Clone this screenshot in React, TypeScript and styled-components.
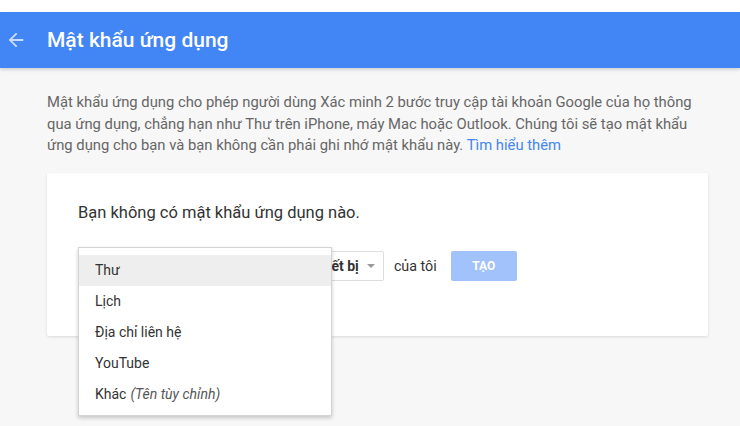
import styled, { createGlobalStyle } from "styled-components";

const GlobalStyle = createGlobalStyle`
  html, body {
    margin: 0;
    padding: 0;
    background: #f7f7f7;
    font-family: Roboto, "Liberation Sans", Arial, sans-serif;
  }
`;

const appOptions = ["Thư", "Lịch", "Địa chỉ liên hệ", "YouTube"];

function BackIcon() {
  return (
    <svg width="22" height="22" viewBox="0 0 24 24" fill="rgba(255,255,255,0.72)">
      <path d="M20 11H7.83l5.59-5.59L12 4l-8 8 8 8 1.41-1.41L7.83 13H20v-2z" />
    </svg>
  );
}

function App() {
  return (
    <Page>
      <GlobalStyle />
      <TopStrip />
      <Header>
        <BackButton>
          <BackIcon />
        </BackButton>
        <Title>Mật khẩu ứng dụng</Title>
      </Header>

      <Content>
        <Intro>
          Mật khẩu ứng dụng cho phép người dùng Xác minh 2 bước truy cập tài
          khoản Google của họ thông qua ứng dụng, chẳng hạn như Thư trên
          iPhone, máy Mac hoặc Outlook. Chúng tôi sẽ tạo mật khẩu ứng dụng cho
          bạn và bạn không cần phải ghi nhớ mật khẩu này.{" "}
          <Link href="#">Tìm hiểu thêm</Link>
        </Intro>

        <Card>
          <EmptyText>Bạn không có mật khẩu ứng dụng nào.</EmptyText>
          <Row>
            <SelectWrap>
              <Select $width={150}>
                <span>Chọn ứng dụng</span>
                <Caret />
              </Select>
              <Menu>
                {appOptions.map((o, i) => (
                  <MenuItem key={o} $active={i === 0}>
                    {o}
                  </MenuItem>
                ))}
                <MenuItem>
                  Khác <em>(Tên tùy chỉnh)</em>
                </MenuItem>
              </Menu>
            </SelectWrap>
            <Word>trên</Word>
            <Select $width={111} $padLeft={5}>
              <span>Chọn thiết bị</span>
              <Caret />
            </Select>
            <Word>của tôi</Word>
            <CreateButton disabled>Tạo</CreateButton>
          </Row>
        </Card>
      </Content>
    </Page>
  );
}

export default App;

const Page = styled.div`
  min-height: 426px;
`;

const TopStrip = styled.div`
  height: 12px;
  background: #fff;
`;

const Header = styled.header`
  height: 56px;
  background: #4285f4;
  display: flex;
  align-items: center;
  box-shadow: 0 2px 3px rgba(0, 0, 0, 0.15);
`;

const BackButton = styled.div`
  width: 47px;
  padding-left: 5px;
  box-sizing: border-box;
  display: flex;
  align-items: center;
`;

const Title = styled.h1`
  margin: 0;
  color: #fff;
  font-size: 21px;
  font-weight: 500;
`;

const Content = styled.main`
  padding: 24px 32px 0 47px;
`;

const Intro = styled.p`
  margin: 0;
  font-size: 14.8px;
  line-height: 21.5px;
  color: #666;
  max-width: 660px;
`;

const Link = styled.a`
  color: #4285f4;
  text-decoration: none;
`;

const Card = styled.section`
  margin-top: 16px;
  width: 661px;
  box-sizing: border-box;
  background: #fff;
  border-radius: 2px;
  box-shadow: 0 1px 3px rgba(0, 0, 0, 0.12);
  padding: 30px 31px 55px;
`;

const EmptyText = styled.p`
  margin: 0;
  font-size: 16.5px;
  line-height: 20px;
  color: #333;
`;

const Row = styled.div`
  margin-top: 28px;
  display: flex;
  align-items: center;
  gap: 9px;
`;

const SelectWrap = styled.div`
  position: relative;
  display: flex;
`;

const Select = styled.div<{ $width: number; $padLeft?: number }>`
  width: ${(p) => p.$width}px;
  height: 30px;
  box-sizing: border-box;
  border: 1px solid #ddd;
  border-radius: 2px;
  padding: 0 10px 0 ${(p) => p.$padLeft ?? 9}px;
  display: flex;
  align-items: center;
  justify-content: space-between;
  font-size: 14px;
  font-weight: 700;
  color: #333;
  white-space: nowrap;
  background: #fff;
`;

const Caret = styled.span`
  width: 0;
  height: 0;
  border-left: 4px solid transparent;
  border-right: 4px solid transparent;
  border-top: 4px solid #999;
  margin-left: 8px;
`;

const Word = styled.span`
  font-size: 14.3px;
  color: #333;
  padding: 0 1px;
`;

const CreateButton = styled.button`
  margin-left: 4px;
  width: 66px;
  height: 30px;
  border: none;
  border-radius: 2px;
  background: #a1c2fa;
  color: #fff;
  font-family: inherit;
  font-size: 12px;
  font-weight: 700;
  text-transform: uppercase;
`;

const Menu = styled.ul`
  position: absolute;
  top: -4px;
  left: 0;
  width: 254px;
  box-sizing: border-box;
  margin: 0;
  padding: 7px 0 5px;
  list-style: none;
  background: #fff;
  border: 1px solid #d4d4d4;
  box-shadow: 0 2px 4px rgba(0, 0, 0, 0.2);
  z-index: 2;
`;

const MenuItem = styled.li<{ $active?: boolean }>`
  height: 31px;
  display: flex;
  align-items: center;
  padding-left: 16px;
  font-size: 14px;
  color: #333;
  background: ${(p) => (p.$active ? "#eee" : "transparent")};

  em {
    margin-left: 4px;
    color: #555;
  }
`;
